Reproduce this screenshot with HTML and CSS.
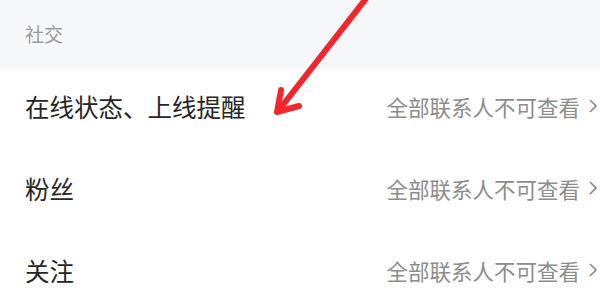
FILE: index.html
```html
<!DOCTYPE html>
<html lang="zh-CN">
<head>
    <meta charset="UTF-8">
    <meta name="viewport" content="width=device-width, initial-scale=1.0">
    <title>社交</title>
    <link rel="stylesheet" href="styles.css">
</head>
<body>
    <div class="page">
        <div class="section-title">社交</div>
        <div class="list">
            <div class="row">
                <span class="label">在线状态、上线提醒</span>
                <span class="value">全部联系人不可查看
                    <svg class="chevron" width="8" height="14" viewBox="0 0 8 14"><polyline points="1,1 7,7 1,13" fill="none" stroke="#8a8a8a" stroke-width="1.6"/></svg>
                </span>
            </div>
            <div class="row">
                <span class="label">粉丝</span>
                <span class="value">全部联系人不可查看
                    <svg class="chevron" width="8" height="14" viewBox="0 0 8 14"><polyline points="1,1 7,7 1,13" fill="none" stroke="#8a8a8a" stroke-width="1.6"/></svg>
                </span>
            </div>
            <div class="row">
                <span class="label">关注</span>
                <span class="value">全部联系人不可查看
                    <svg class="chevron" width="8" height="14" viewBox="0 0 8 14"><polyline points="1,1 7,7 1,13" fill="none" stroke="#8a8a8a" stroke-width="1.6"/></svg>
                </span>
            </div>
        </div>

        <!-- red annotation arrow drawn over the list -->
        <svg class="arrow" width="600" height="300" viewBox="0 0 600 300">
            <g stroke="#f3262b" stroke-width="6" stroke-linecap="round" stroke-linejoin="round" fill="none">
                <line x1="368" y1="-4" x2="279" y2="110"/>
                <polyline points="281,90 277,112 299,106"/>
            </g>
        </svg>
    </div>
</body>
</html>
```

FILE: styles.css
```css
body {
    margin: 0;
    background-color: #ffffff;
    font-family: "Noto Sans CJK SC", "Noto Sans", sans-serif;
}
.page {
    position: relative;
    width: 600px;
    height: 300px;
    overflow: hidden;
}
.section-title {
    height: 70px;
    background-color: #f6f7f9;
    color: #9a9a9a;
    font-size: 19px;
    padding: 0 0 4px 25px;
    box-sizing: border-box;
    display: flex;
    align-items: center;
}
.row {
    height: 82px;
    display: flex;
    align-items: center;
    justify-content: space-between;
    padding: 0 3px 10px 25px;
    box-sizing: border-box;
}
.label {
    font-size: 24.5px;
    color: #262626;
}
.value {
    display: flex;
    align-items: center;
    font-size: 21.5px;
    color: #8c8c8c;
}
.chevron {
    margin-left: 9px;
}
.arrow {
    position: absolute;
    top: 0;
    left: 0;
    pointer-events: none;
}
```
